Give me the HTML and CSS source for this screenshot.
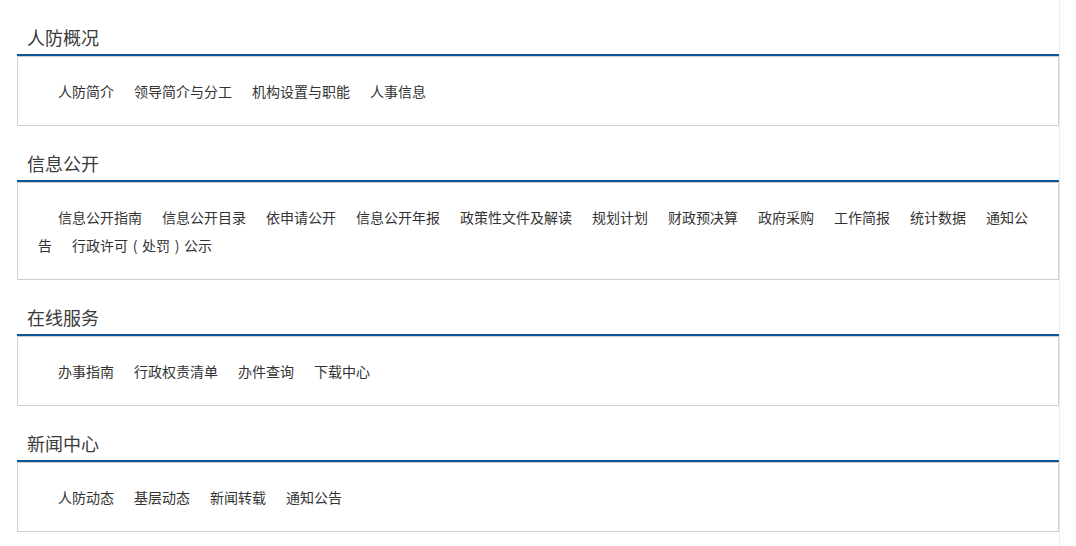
FILE: index.html
```html
<!DOCTYPE html>
<html lang="zh-CN">
<head>
<meta charset="utf-8">
<title>人防</title>
<link rel="stylesheet" href="styles.css">
</head>
<body>
<div class="page">
  <main class="main">
    <section class="sec">
      <h2 class="sec-title">人防概况</h2>
      <div class="sec-box">
        <p class="links"><a>人防简介</a><a>领导简介与分工</a><a>机构设置与职能</a><a>人事信息</a></p>
      </div>
    </section>
    <section class="sec">
      <h2 class="sec-title">信息公开</h2>
      <div class="sec-box">
        <p class="links"><a>信息公开指南</a><a>信息公开目录</a><a>依申请公开</a><a>信息公开年报</a><a>政策性文件及解读</a><a>规划计划</a><a>财政预决算</a><a>政府采购</a><a>工作简报</a><a>统计数据</a><a>通知公告</a><a>行政许可<span class="paren">(</span>处罚<span class="paren">)</span>公示</a></p>
      </div>
    </section>
    <section class="sec">
      <h2 class="sec-title">在线服务</h2>
      <div class="sec-box">
        <p class="links"><a>办事指南</a><a>行政权责清单</a><a>办件查询</a><a>下载中心</a></p>
      </div>
    </section>
    <section class="sec">
      <h2 class="sec-title">新闻中心</h2>
      <div class="sec-box">
        <p class="links"><a>人防动态</a><a>基层动态</a><a>新闻转载</a><a>通知公告</a></p>
      </div>
    </section>
  </main>
  <div class="side"></div>
</div>
</body>
</html>
```
FILE: styles.css
```css
html, body {
  margin: 0;
  padding: 0;
  background: #fff;
}
body {
  font-family: "Microsoft YaHei", "Noto Sans CJK SC", "Noto Sans", sans-serif;
  color: #333;
}
.page {
  display: flex;
  min-height: 546px;
}
.main {
  width: 1043px;
  margin-left: 17px;
}
.side {
  width: 16px;
  border-left: 1px solid #ececec;
  background: #fff;
}
.sec-title {
  margin: 0;
  padding: 21px 0 0 10px;
  height: 33px;
  line-height: 32px;
  font-size: 18px;
  font-weight: normal;
  color: #3a3a3a;
  border-bottom: 2px solid #0c5597;
}
.sec-box {
  border: 1px solid #cfcfcf;
  padding: 20px 20px;
}
.links {
  margin: 0;
  font-size: 14px;
  line-height: 28px;
  text-indent: 20px;
}
.links a {
  color: #333;
  margin-right: 20px;
  text-decoration: none;
}
.links .paren {
  display: inline-block;
  width: 14px;
  text-indent: 0;
  text-align: center;
}
```
